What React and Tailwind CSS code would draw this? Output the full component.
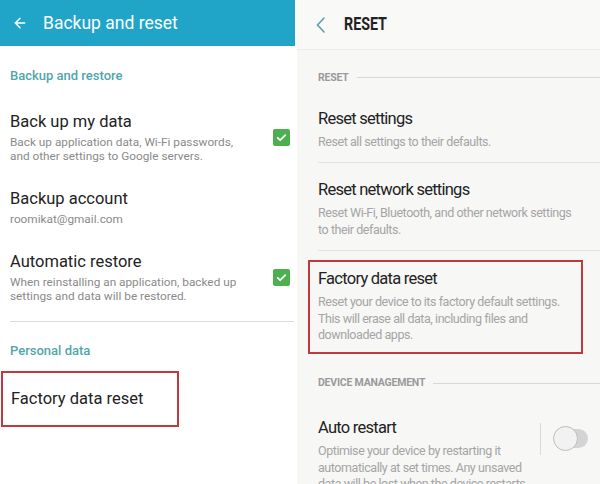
import { ArrowLeft } from 'lucide-react';

const roboto = { fontFamily: 'Roboto, "Noto Sans", sans-serif' };

const CheckBox = () => (
  <div className="w-[17px] h-[17px] rounded-[2px] bg-[#4cb050] flex items-center justify-center">
    <svg width="13" height="13" viewBox="0 0 24 24" fill="none" stroke="white" strokeWidth="3.2" strokeLinecap="round" strokeLinejoin="round">
      <path d="M5 12.5l4.5 4.5L19 7.5" />
    </svg>
  </div>
);

const LeftRow = ({ title, sub, checked, className = '' }) => (
  <div className={`flex items-center pl-[10px] pr-[7px] ${className}`}>
    <div className="flex-1">
      <div className="text-[16.5px] leading-[22px] text-[#222]">{title}</div>
      {sub && <div className="text-[11.8px] leading-[14px] text-[#8a8a8a] mt-[2px]">{sub}</div>}
    </div>
    {checked && <CheckBox />}
  </div>
);

const SectionHead = ({ label, className = '' }) => (
  <div className={`flex items-center ${className}`}>
    <span className="text-[10.5px] font-bold text-[#9a9a9a] tracking-[-0.02em]">{label}</span>
    <div className="flex-1 h-px bg-[#d8d8d8] ml-[8px]" />
  </div>
);

const RightRow = ({ title, lines }) => (
  <div>
    <div className="text-[16.5px] leading-[22px] text-[#222] tracking-[-0.045em]">{title}</div>
    <div className="text-[12.5px] leading-[16.5px] text-[#a5a5a5] mt-[4px] tracking-[-0.035em]">
      {lines.map((l) => (
        <div key={l}>{l}</div>
      ))}
    </div>
  </div>
);

export default function App() {
  return (
    <div className="w-[600px] h-[484px] flex overflow-hidden bg-white" style={roboto}>
      {/* left screen */}
      <div className="w-[297px] shrink-0 bg-white">
        <div className="w-[295px] h-[46px] bg-[#20a5c8] flex items-center">
          <ArrowLeft className="ml-[12px] text-white" size={16} strokeWidth={2.2} />
          <span className="ml-[15px] text-[17.5px] text-white">Backup and reset</span>
        </div>
        <div className="pl-[10px] mt-[21px] text-[13px] leading-[18px] font-medium text-[#4fa6ac]">Backup and restore</div>
        <LeftRow
          className="mt-[26px]"
          title="Back up my data"
          sub={<>Back up application data, Wi-Fi passwords,<br />and other settings to Google servers.</>}
          checked
        />
        <LeftRow className="mt-[25px]" title="Backup account" sub="roomikat@gmail.com" />
        <LeftRow
          className="mt-[25px]"
          title="Automatic restore"
          sub={<>When reinstalling an application, backed up<br />settings and data will be restored.</>}
          checked
        />
        <div className="ml-[10px] mr-[3px] mt-[18px] h-px bg-[#dcdcdc]" />
        <div className="pl-[10px] mt-[20px] text-[13px] leading-[18px] font-medium text-[#4fa6ac]">Personal data</div>
        <div className="ml-[1px] mt-[11px] w-[178px] h-[56px] border-2 border-[#c0393f] flex items-center pl-[8px]">
          <span className="text-[16.5px] text-[#222]">Factory data reset</span>
        </div>
      </div>

      {/* right screen */}
      <div className="flex-1 bg-[#f7f7f6]">
        <div className="h-[50px] flex items-center border-b border-[#ececec] bg-[#f9f9f8]">
          <svg className="ml-[19px]" width="9" height="16" viewBox="0 0 9 16" fill="none" stroke="#5f9ea7" strokeWidth="1.6" strokeLinecap="round" strokeLinejoin="round">
            <polyline points="8,1 1.5,8 8,15" />
          </svg>
          <span className="ml-[19px] inline-block origin-left scale-x-[0.75] text-[19px] font-bold text-[#222]">RESET</span>
        </div>
        <div className="pl-[21px]">
          <SectionHead label="RESET" className="mt-[20px]" />
          <div className="mt-[22px] pb-[12px] border-b border-[#e2e2e2]">
            <RightRow title="Reset settings" lines={['Reset all settings to their defaults.']} />
          </div>
          <div className="mt-[16px] pb-[12px] border-b border-[#e2e2e2]">
            <RightRow
              title="Reset network settings"
              lines={['Reset Wi-Fi, Bluetooth, and other network settings', 'to their defaults.']}
            />
          </div>
        </div>
        <div className="ml-[11px] mr-[17px] mt-[9px] h-[94px] border-2 border-[#c0393f] pl-[8px] pt-[6px]">
          <RightRow
            title="Factory data reset"
            lines={['Reset your device to its factory default settings.', 'This will erase all data, including files and', 'downloaded apps.']}
          />
        </div>
        <div className="pl-[21px]">
          <SectionHead label="DEVICE MANAGEMENT" className="mt-[21px]" />
          <div className="mt-[26px] flex">
            <div className="w-[222px]">
              <RightRow
                title="Auto restart"
                lines={['Optimise your device by restarting it', 'automatically at set times. Any unsaved', 'data will be lost when the device restarts.']}
              />
            </div>
            <div className="w-px h-[32px] bg-[#dadada] mt-[6px]" />
            <div className="relative ml-[12px] mt-[9px] w-[36px] h-[25px]">
              <div className="absolute left-[8px] top-[3px] w-[27px] h-[19px] rounded-full bg-[#d4d4d4]" />
              <div className="absolute left-0 top-0 w-[25px] h-[25px] rounded-full bg-[#f2f2f2] border border-[#bdbdbd]" />
            </div>
          </div>
        </div>
      </div>
    </div>
  );
}
